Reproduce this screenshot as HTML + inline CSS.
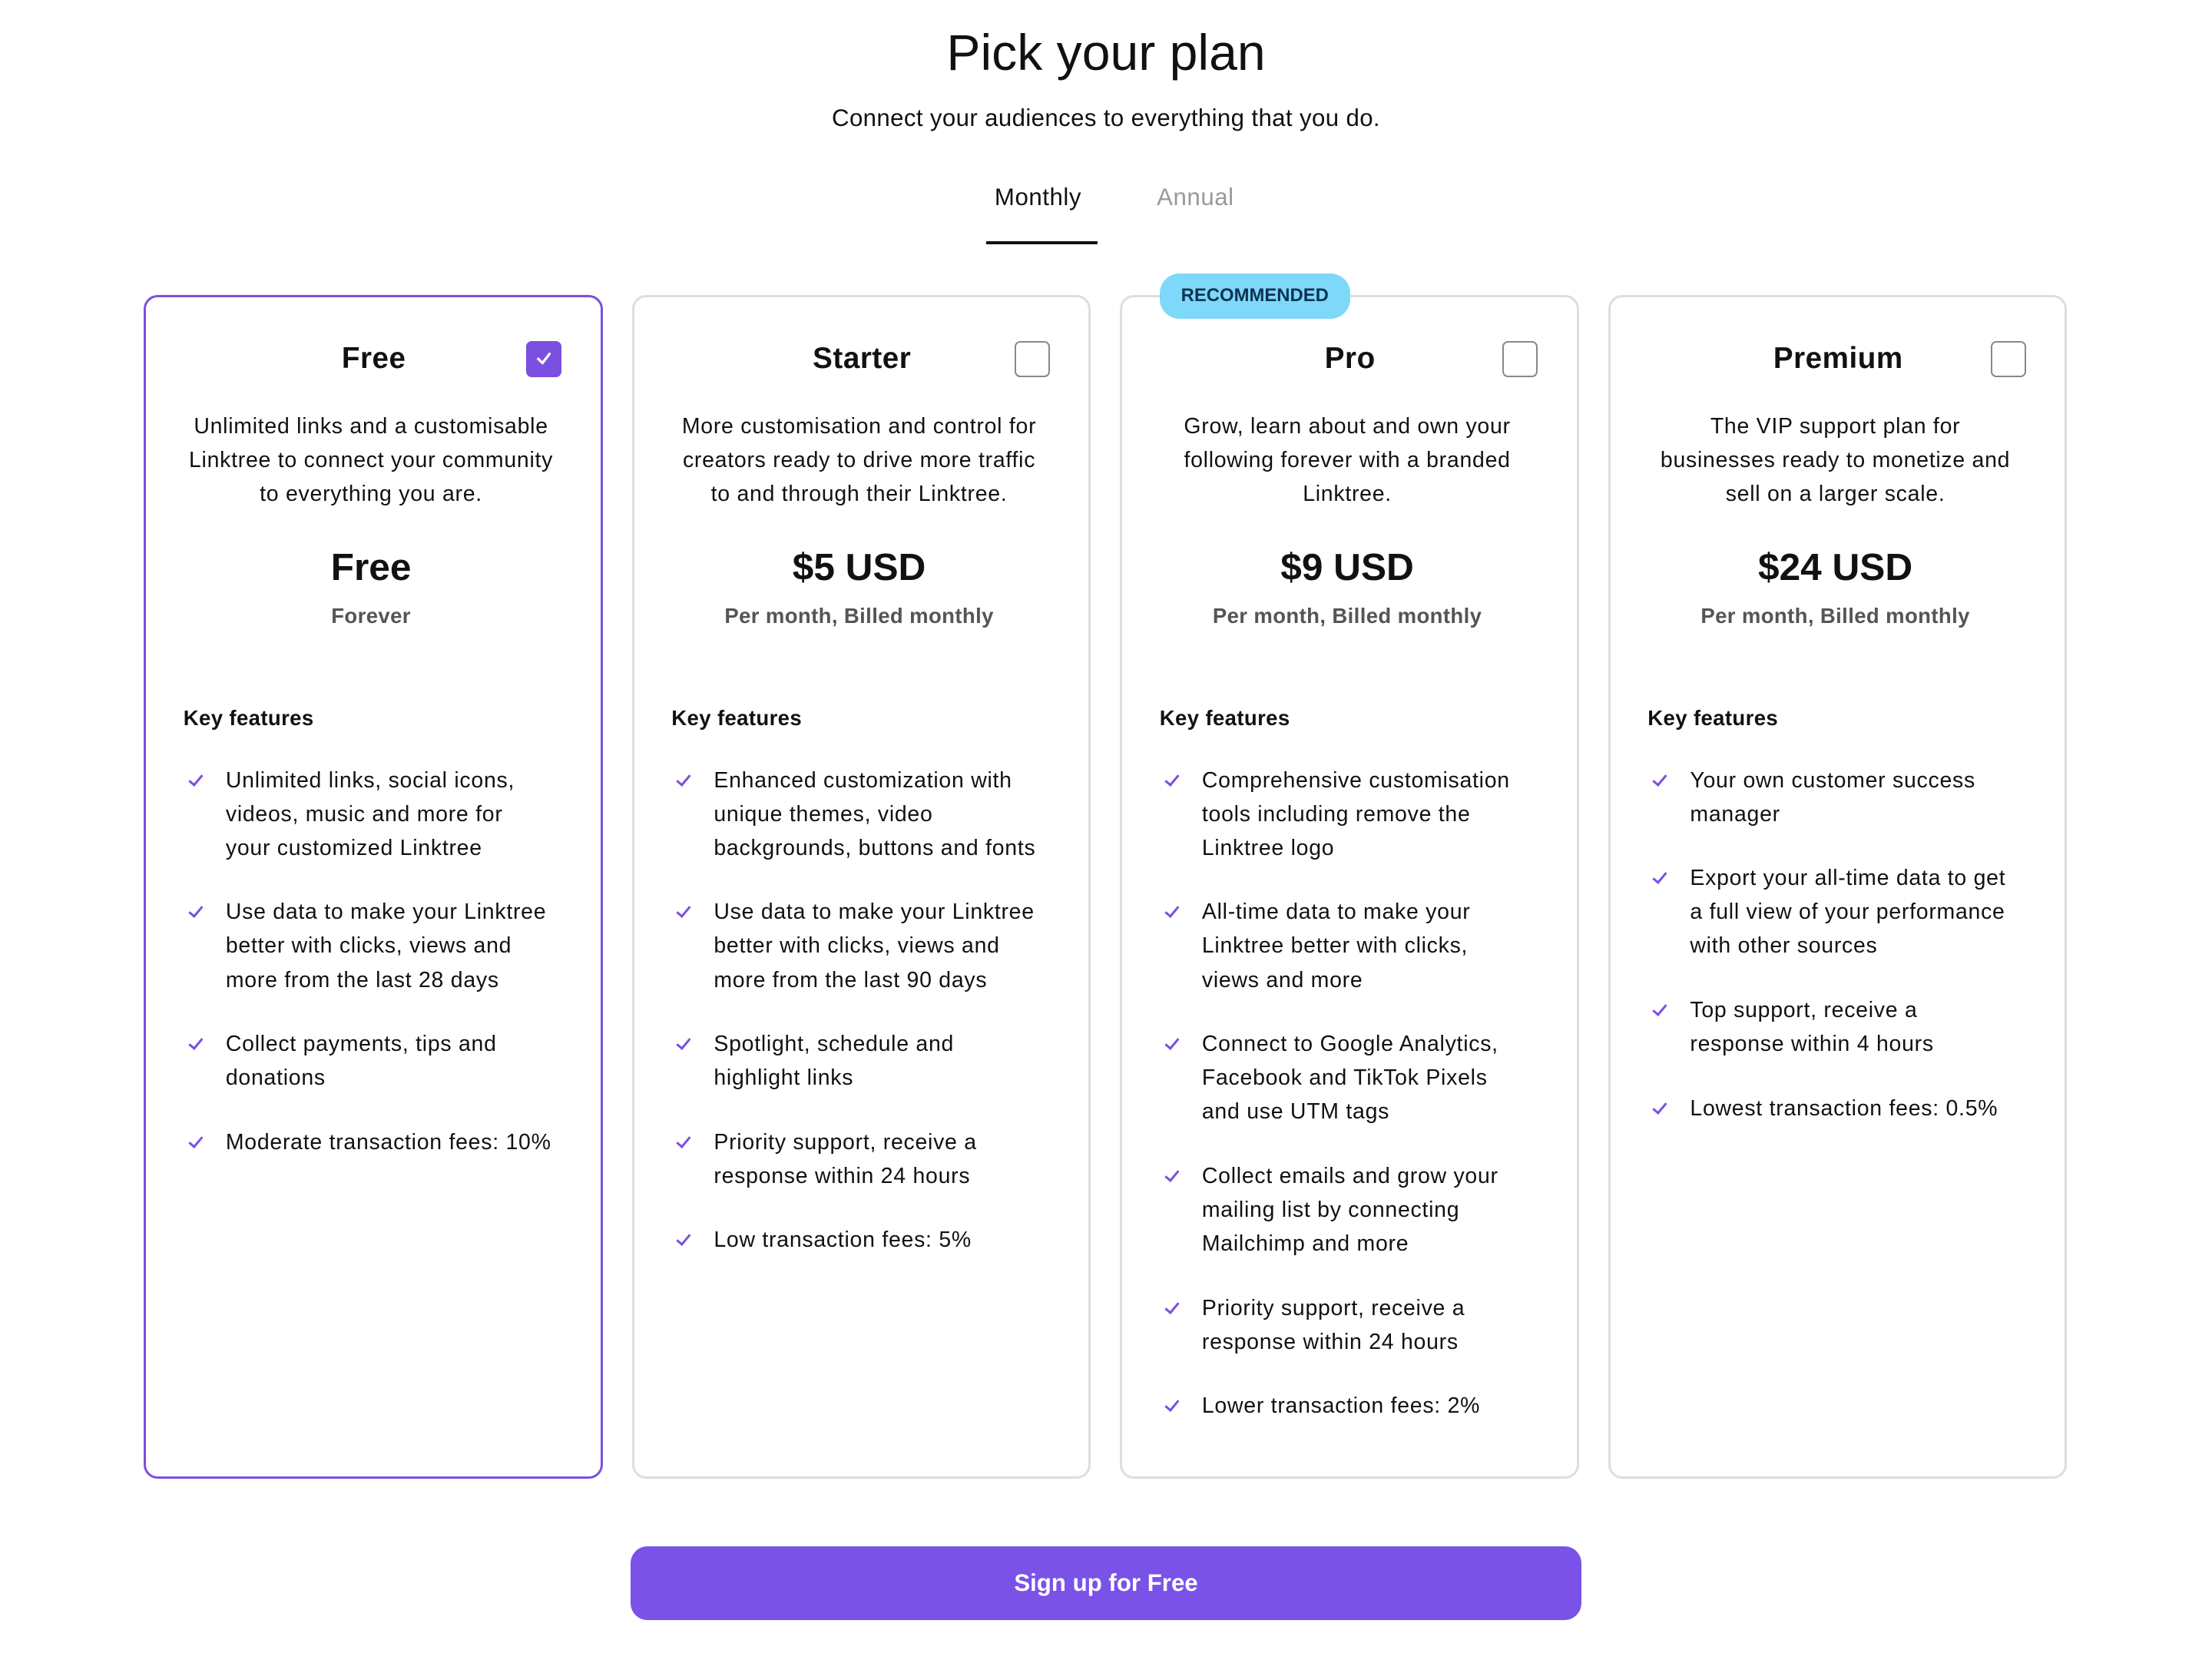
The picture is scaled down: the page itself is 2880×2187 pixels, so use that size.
<!DOCTYPE html>
<html><head><meta charset="utf-8">
<style>
html,body{margin:0;padding:0;background:#fff;}
body{width:1568px;height:1190px;zoom:1.83674;overflow:hidden;position:relative;font-family:"Liberation Sans",Arial,sans-serif;color:#111;}
.t{position:absolute;left:0;width:1568px;text-align:center;}
h1{position:absolute;left:0;width:1568px;text-align:center;margin:0;top:16px;font-size:36px;font-weight:400;line-height:44px;}
.sub{top:73px;font-size:17px;line-height:22px;letter-spacing:0.2px;}
.tab{position:absolute;top:129px;font-size:17px;line-height:22px;letter-spacing:0.3px;}
.ul{position:absolute;left:699px;top:171px;width:79px;height:2px;background:#111;}
.card{position:absolute;top:209px;width:322px;height:836px;border:2px solid #dedede;border-radius:10px;}
.card.sel{border-color:#7b4fe0;}
.ct{position:absolute;left:0;width:100%;text-align:center;top:240px;font-size:21px;font-weight:700;line-height:28px;letter-spacing:0.3px;}
.cb{position:absolute;width:23px;height:23px;border:1.5px solid #888;border-radius:4px;top:242px;}
.cb.on{background:#7b4fe0;border-color:#7b4fe0;}
.desc{position:absolute;width:322px;text-align:center;top:290px;font-size:15.5px;line-height:24px;letter-spacing:0.4px;}
.price{position:absolute;width:322px;text-align:center;top:385px;font-size:27px;font-weight:700;line-height:34px;}
.per{position:absolute;width:322px;text-align:center;top:427px;font-size:15px;font-weight:700;line-height:20px;color:#555;letter-spacing:0.2px;}
.kf{position:absolute;top:499px;font-size:15px;font-weight:700;line-height:20px;letter-spacing:0.2px;}
ul.f{position:absolute;top:541px;margin:0;padding:0;list-style:none;font-size:15.5px;line-height:24px;letter-spacing:0.4px;}
ul.f li{position:relative;padding-left:28px;margin-bottom:21.5px;}
ul.f li:before{content:"";position:absolute;left:4px;top:6px;width:4px;height:8px;border-right:2px solid #7b4fe0;border-bottom:2px solid #7b4fe0;transform:rotate(40deg);}
.badge{position:absolute;left:822px;top:194px;width:135px;height:32px;border-radius:14px;background:#7dd8fa;color:#0e3350;font-size:13px;font-weight:700;line-height:32px;text-align:center;}
.btn{position:absolute;left:447px;top:1096px;width:674px;height:52px;border-radius:12px;background:#7a52e8;color:#fff;font-size:17px;font-weight:700;line-height:52px;text-align:center;}
</style></head><body>
<h1>Pick your plan</h1>
<div class="t sub">Connect your audiences to everything that you do.</div>
<div class="tab" style="left:705px;color:#111">Monthly</div>
<div class="tab" style="left:820px;color:#999">Annual</div>
<div class="ul"></div>

<div class="card sel" style="left:102px"></div>
<div class="card" style="left:448px"></div>
<div class="card" style="left:794px"></div>
<div class="card" style="left:1140px"></div>
<div class="badge">RECOMMENDED</div>

<!-- Free -->
<div style="position:absolute;left:102px;top:0;width:326px">
<div class="ct">Free</div>
<div class="cb on" style="left:271px"><svg width="23" height="23" viewBox="0 0 23 23"><path d="M7.5 11.5l3 3 5-6.5" fill="none" stroke="#fff" stroke-width="1.8" stroke-linecap="round" stroke-linejoin="round"/></svg></div>
<div class="desc">Unlimited links and a customisable<br>Linktree to connect your community<br>to everything you are.</div>
<div class="price">Free</div>
<div class="per">Forever</div>
<div class="kf" style="left:28px">Key features</div>
<ul class="f" style="left:30px;width:290px">
<li>Unlimited links, social icons,<br>videos, music and more for<br>your customized Linktree</li>
<li>Use data to make your Linktree<br>better with clicks, views and<br>more from the last 28 days</li>
<li>Collect payments, tips and<br>donations</li>
<li>Moderate transaction fees: 10%</li>
</ul></div>

<!-- Starter -->
<div style="position:absolute;left:448px;top:0;width:326px">
<div class="ct">Starter</div>
<div class="cb" style="left:271px"></div>
<div class="desc">More customisation and control for<br>creators ready to drive more traffic<br>to and through their Linktree.</div>
<div class="price">$5 USD</div>
<div class="per">Per month, Billed monthly</div>
<div class="kf" style="left:28px">Key features</div>
<ul class="f" style="left:30px;width:290px">
<li>Enhanced customization with<br>unique themes, video<br>backgrounds, buttons and fonts</li>
<li>Use data to make your Linktree<br>better with clicks, views and<br>more from the last 90 days</li>
<li>Spotlight, schedule and<br>highlight links</li>
<li>Priority support, receive a<br>response within 24 hours</li>
<li>Low transaction fees: 5%</li>
</ul></div>

<!-- Pro -->
<div style="position:absolute;left:794px;top:0;width:326px">
<div class="ct">Pro</div>
<div class="cb" style="left:271px"></div>
<div class="desc">Grow, learn about and own your<br>following forever with a branded<br>Linktree.</div>
<div class="price">$9 USD</div>
<div class="per">Per month, Billed monthly</div>
<div class="kf" style="left:28px">Key features</div>
<ul class="f" style="left:30px;width:290px">
<li>Comprehensive customisation<br>tools including remove the<br>Linktree logo</li>
<li>All-time data to make your<br>Linktree better with clicks,<br>views and more</li>
<li>Connect to Google Analytics,<br>Facebook and TikTok Pixels<br>and use UTM tags</li>
<li>Collect emails and grow your<br>mailing list by connecting<br>Mailchimp and more</li>
<li>Priority support, receive a<br>response within 24 hours</li>
<li>Lower transaction fees: 2%</li>
</ul></div>

<!-- Premium -->
<div style="position:absolute;left:1140px;top:0;width:326px">
<div class="ct">Premium</div>
<div class="cb" style="left:271px"></div>
<div class="desc">The VIP support plan for<br>businesses ready to monetize and<br>sell on a larger scale.</div>
<div class="price">$24 USD</div>
<div class="per">Per month, Billed monthly</div>
<div class="kf" style="left:28px">Key features</div>
<ul class="f" style="left:30px;width:290px">
<li>Your own customer success<br>manager</li>
<li>Export your all-time data to get<br>a full view of your performance<br>with other sources</li>
<li>Top support, receive a<br>response within 4 hours</li>
<li>Lowest transaction fees: 0.5%</li>
</ul></div>

<div class="btn">Sign up for Free</div>
</body></html>
